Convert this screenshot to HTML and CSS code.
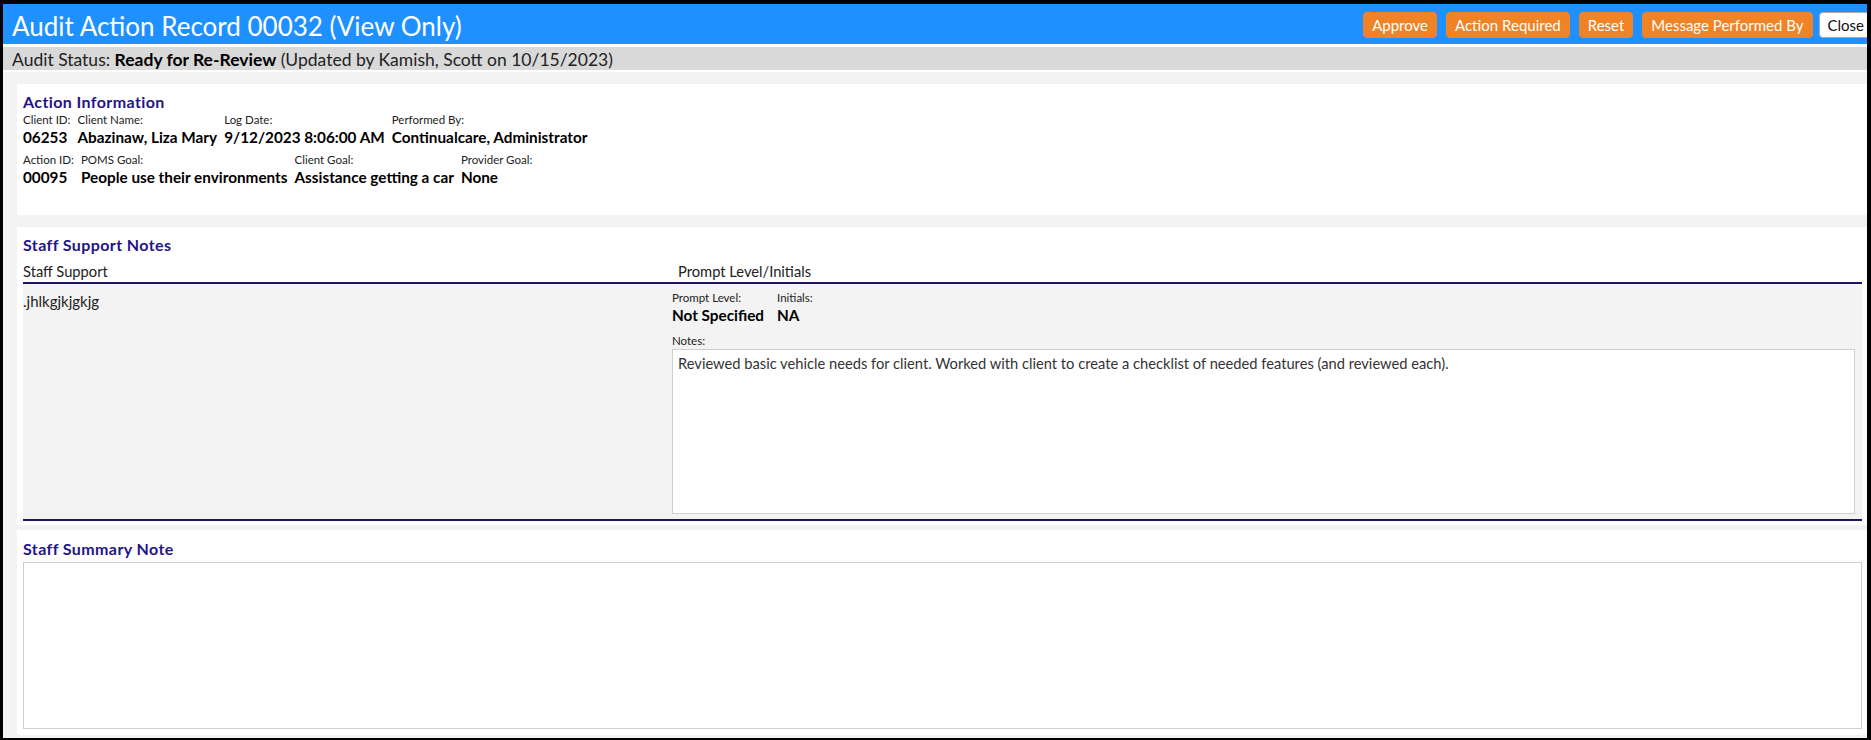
FILE: index.html
```html
<!DOCTYPE html>
<html lang="en">
<head>
  <meta charset="UTF-8" />
  <title>Audit Action Record 00032</title>
  <link rel="stylesheet" href="styles.css">
</head>
<body>
  <div class="frame">
    <header class="titlebar">
      <h1 class="title">Audit Action Record 00032 (View Only)</h1>
      <div class="actions">
        <button class="btn">Approve</button>
        <button class="btn">Action Required</button>
        <button class="btn">Reset</button>
        <button class="btn">Message Performed By</button>
        <button class="btn btn-close">Close</button>
      </div>
    </header>
    <div class="status">Audit Status: <strong>Ready for Re-Review</strong> (Updated by Kamish, Scott on 10/15/2023)</div>

    <main class="content">
      <section class="panel panel-info">
        <h2>Action Information</h2>
        <div class="fields">
          <div class="field"><span class="lbl">Client ID:</span><span class="val">06253</span></div>
          <div class="field"><span class="lbl">Client Name:</span><span class="val">Abazinaw, Liza Mary</span></div>
          <div class="field"><span class="lbl">Log Date:</span><span class="val">9/12/2023 8:06:00 AM</span></div>
          <div class="field"><span class="lbl">Performed By:</span><span class="val">Continualcare, Administrator</span></div>
        </div>
        <div class="fields fields-second">
          <div class="field"><span class="lbl">Action ID:</span><span class="val">00095</span></div>
          <div class="field"><span class="lbl">POMS Goal:</span><span class="val">People use their environments</span></div>
          <div class="field"><span class="lbl">Client Goal:</span><span class="val">Assistance getting a car</span></div>
          <div class="field"><span class="lbl">Provider Goal:</span><span class="val">None</span></div>
        </div>
      </section>

      <section class="panel panel-notes">
        <h2>Staff Support Notes</h2>
        <div class="notes-head">
          <div class="col-left">Staff Support</div>
          <div class="col-right">Prompt Level/Initials</div>
        </div>
        <div class="notes-row">
          <div class="col-left support-text">.jhlkgjkjgkjg</div>
          <div class="col-right prompt-cell">
            <div class="fields fields-prompt">
              <div class="field"><span class="lbl">Prompt Level:</span><span class="val">Not Specified</span></div>
              <div class="field"><span class="lbl">Initials:</span><span class="val">NA</span></div>
            </div>
            <span class="lbl notes-lbl">Notes:</span>
            <div class="notes-box">Reviewed basic vehicle needs for client. Worked with client to create a checklist of needed features (and reviewed each).</div>
          </div>
        </div>
      </section>

      <section class="panel panel-summary">
        <h2>Staff Summary Note</h2>
        <div class="summary-box"></div>
      </section>
    </main>
  </div>
</body>
</html>
```

FILE: styles.css
```css
html, body {
  margin: 0;
  padding: 0;
}
body {
  font-family: Lato, "Open Sans", sans-serif;
  color: #222;
  background: #000;
}
.frame {
  box-sizing: border-box;
  width: 1871px;
  height: 740px;
  overflow: hidden;
  border-style: solid;
  border-color: #000;
  border-width: 4px 4px 2px 3px;
  background: #fff;
}

/* title bar */
.titlebar {
  display: flex;
  justify-content: space-between;
  align-items: flex-start;
  height: 40px;
  padding-left: 9px;
  background: #1e90ff;
}
.title {
  margin: 2px 0 0;
  font-size: 26px;
  font-weight: normal;
  line-height: 40px;
  color: #fff;
  white-space: nowrap;
}
.actions {
  display: flex;
  gap: 9px;
  margin-top: 8px;
  margin-right: -6px;
}
.btn {
  font-family: inherit;
  font-size: 15px;
  line-height: 24px;
  padding: 0 8px;
  border: 1px solid #ef8326;
  border-radius: 4px;
  background: #ef8326;
  color: #fff;
  white-space: nowrap;
}
.btn-close {
  margin-left: -3px;
  background: #fff;
  color: #111;
  border-color: #aaa;
}
.status {
  margin-top: 3px;
  height: 23px;
  box-sizing: border-box;
  padding: 2px 0 0 9px;
  font-size: 17.5px;
  line-height: 21px;
  background: #d9d9d9;
  color: #222;
}
.status strong {
  color: #000;
}

/* content */
.content {
  margin-top: 2px;
  padding: 12px 0 20px 14px;
  background: #f3f3f3;
}
.panel {
  background: #fff;
  padding: 8px 5px 0 6px;
}
.panel h2 {
  margin: 0;
  font-size: 16px;
  letter-spacing: 0.4px;
  line-height: 20px;
  color: #1f1488;
}
.panel-info {
  padding-bottom: 28px;
  margin-bottom: 12px;
}
.panel-notes {
  padding-bottom: 4px;
  margin-bottom: 5px;
}
.panel-summary {
  padding-top: 9px;
  padding-bottom: 6px;
}

.fields {
  display: flex;
  gap: 7px;
  margin-top: 1px;
}
.fields-second {
  margin-top: 6px;
}
.field {
  display: flex;
  flex-direction: column;
}
.lbl {
  font-size: 11.5px;
  line-height: 14px;
  color: #222;
}
.val {
  font-size: 15.3px;
  font-weight: bold;
  line-height: 20px;
  color: #000;
  white-space: nowrap;
}

/* staff support table */
.notes-head,
.notes-row {
  display: grid;
  grid-template-columns: 649px 1fr;
}
.notes-head {
  padding: 6px 0 1px;
  font-size: 14.7px;
  line-height: 20px;
  border-bottom: 2px solid #1b1464;
}
.notes-head .col-right {
  padding-left: 6px;
}
.notes-row {
  background: #f3f3f3;
  border-bottom: 2px solid #1b1464;
}
.support-text {
  padding-top: 7px;
  font-size: 15px;
  line-height: 20px;
}
.prompt-cell {
  padding: 7px 7px 5px 0;
}
.fields-prompt {
  margin-top: 0;
  gap: 13px;
}
.notes-lbl {
  display: block;
  margin-top: 9px;
}
.notes-box {
  box-sizing: border-box;
  height: 165px;
  margin-top: 1px;
  padding: 4px 5px;
  border: 1px solid #cfcfcf;
  background: #fff;
  font-size: 14.7px;
  line-height: 18px;
  color: #333;
}
.summary-box {
  box-sizing: border-box;
  height: 167px;
  margin-top: 3px;
  border: 1px solid #cfcfcf;
  background: #fff;
}
```
